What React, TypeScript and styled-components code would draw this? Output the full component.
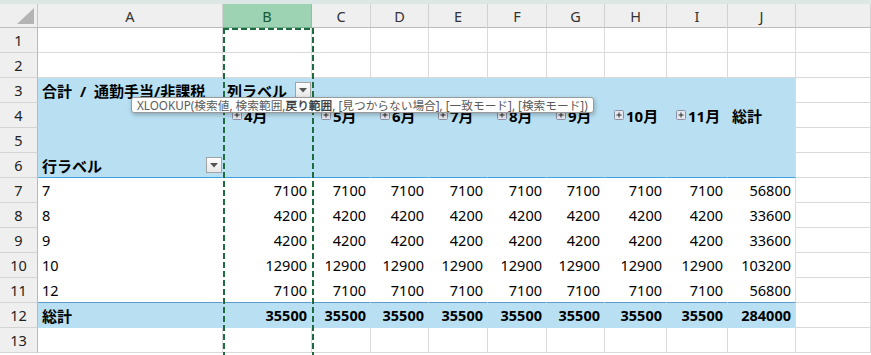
import React from "react";
import styled, { createGlobalStyle } from "styled-components";

const GlobalStyle = createGlobalStyle`
  html, body {
    margin: 0;
    padding: 0;
    background: #ffffff;
  }
  body {
    font-family: "Noto Sans", "Noto Sans CJK JP", sans-serif;
    color: #000;
    overflow: hidden;
  }
`;

const COL_WIDTHS = [185, 89, 59, 58, 59, 59, 58, 62, 61, 68];
const LETTERS = ["A", "B", "C", "D", "E", "F", "G", "H", "I", "J"];
const MONTHS = ["4月", "5月", "6月", "7月", "8月", "9月", "10月", "11月"];

const GRID = "#dadada";
const PIVOT_BLUE = "#b8e0f2";
const HEAD_LINE = "#3ea3de";
const TOTAL_LINE = "#5b9bc8";

type Tone = "plain" | "head" | "data" | "total";

const toneBg: Record<Tone, string> = {
  plain: "#ffffff",
  head: PIVOT_BLUE,
  data: "#ffffff",
  total: PIVOT_BLUE,
};

const Frame = styled.div`
  position: relative;
  width: 871px;
  height: 355px;
  overflow: hidden;
`;

const TopStrip = styled.div`
  height: 4px;
  background: #dde8e6;
`;

const Sheet = styled.div`
  display: grid;
  grid-template-columns: 38px ${COL_WIDTHS.map((w) => `${w}px`).join(" ")} 1fr;
  grid-template-rows: 24px repeat(13, 25px);
`;

const Corner = styled.div`
  box-sizing: border-box;
  display: flex;
  align-items: flex-end;
  justify-content: flex-end;
  padding: 0 3px 3px 0;
  background: #efefef;
  border-right: 1px solid #c6c6c6;
  border-bottom: 1px solid #bcbcbc;
`;

const ColHead = styled.div<{ $selected?: boolean }>`
  box-sizing: border-box;
  display: flex;
  align-items: center;
  justify-content: center;
  font-size: 14.5px;
  color: ${(p) => (p.$selected ? "#145a32" : "#333333")};
  background: ${(p) => (p.$selected ? "#9dd3b3" : "#efefef")};
  border-right: 1px solid ${(p) => (p.$selected ? "#8cc3a3" : "#d2d2d2")};
  border-bottom: 1px solid ${(p) => (p.$selected ? "#6fae8a" : "#bcbcbc")};
`;

const RowHead = styled.div`
  box-sizing: border-box;
  display: flex;
  align-items: center;
  justify-content: center;
  font-size: 14.5px;
  color: #222222;
  background: #efefef;
  border-right: 1px solid #b9b9b9;
  border-bottom: 1px solid #d4d4d4;
`;

const Cell = styled.div<{
  $tone: Tone;
  $right?: boolean;
  $bold?: boolean;
  $indent?: number;
  $lineRight: string;
  $lineBottom: string;
}>`
  box-sizing: border-box;
  display: flex;
  align-items: center;
  justify-content: ${(p) => (p.$right ? "flex-end" : "flex-start")};
  padding: 0 4px 0 ${(p) => p.$indent ?? 4}px;
  font-size: 14.5px;
  font-weight: ${(p) => (p.$bold ? 700 : 400)};
  white-space: nowrap;
  background: ${(p) => toneBg[p.$tone]};
  border-right: 1px solid ${(p) => p.$lineRight};
  border-bottom: 1px solid ${(p) => p.$lineBottom};
`;

const PivotTitle = styled.span`
  font-size: 15px;
  word-spacing: 4px;
`;

const DropButton = styled.span`
  box-sizing: border-box;
  display: flex;
  align-items: center;
  justify-content: center;
  width: 16px;
  height: 16px;
  margin: 0 -4px 0 auto;
  border: 1px solid #a3a3a3;
  background: linear-gradient(#fdfdfd, #e8e8e8);
`;

const MonthLabel = styled.span`
  display: inline-flex;
  align-items: center;
  gap: 2px;
  font-size: 15px;
`;

const Marquee = styled.div`
  position: absolute;
  left: 223px;
  top: 28px;
  width: 91px;
  bottom: 0;
  pointer-events: none;
  background:
    repeating-linear-gradient(to bottom, #1d6b3f 0 6px, transparent 6px 9px) left top / 2px 100% no-repeat,
    repeating-linear-gradient(to bottom, #1d6b3f 0 6px, transparent 6px 9px) right top / 2px 100% no-repeat,
    repeating-linear-gradient(to right, #1d6b3f 0 6px, transparent 6px 9px) left top / 100% 2px no-repeat;
`;

const Tooltip = styled.div`
  position: absolute;
  left: 131px;
  top: 97px;
  z-index: 2;
  box-sizing: border-box;
  height: 16px;
  padding: 0 5px;
  display: flex;
  align-items: center;
  font-size: 11.7px;
  line-height: 14px;
  color: #5a5a5a;
  white-space: nowrap;
  background: #ffffff;
  border: 1px solid #9a9a9a;
  border-radius: 3px;
  box-shadow: 1px 2px 4px rgba(0, 0, 0, 0.25);

  b {
    font-weight: 400;
    color: #333333;
    -webkit-text-stroke: 0.3px #333333;
  }
`;

const CornerMark = () => (
  <svg width="17" height="16" viewBox="0 0 17 16">
    <polygon points="17,0 17,16 0,16" fill="#b4b4b4" />
  </svg>
);

const DropArrow = () => (
  <DropButton>
    <svg width="8" height="5" viewBox="0 0 8 5">
      <polygon points="0,0 8,0 4,4.5" fill="#555555" />
    </svg>
  </DropButton>
);

const PlusBox = () => (
  <svg width="10" height="10" viewBox="0 0 10 10">
    <rect x="0.5" y="0.5" width="9" height="9" rx="1" fill="#e6e7ee" stroke="#8b8fa3" />
    <path d="M2.5 5h5M5 2.5v5" stroke="#2b2b2b" strokeWidth="1" />
  </svg>
);

type Row = {
  label: string;
  value: number;
};

const DATA: Row[] = [
  { label: "7", value: 7100 },
  { label: "8", value: 4200 },
  { label: "9", value: 4200 },
  { label: "10", value: 12900 },
  { label: "12", value: 7100 },
];

const lines = (tone: Tone, col: number, rowNo: number) => {
  if (tone === "plain") return { r: GRID, b: GRID };
  const fill = toneBg[tone];
  const r = col === 9 ? GRID : fill;
  let b = fill;
  if (rowNo === 6) b = HEAD_LINE;
  if (rowNo === 11) b = TOTAL_LINE;
  return { r, b };
};

type CellOpts = { right?: boolean; bold?: boolean; indent?: number };

const App = () => {
  const rows: React.ReactNode[] = [];

  const pushRow = (
    rowNo: number,
    tone: Tone,
    render: (col: number) => React.ReactNode,
    opts?: (col: number) => CellOpts
  ) => {
    rows.push(<RowHead key={`h${rowNo}`}>{rowNo}</RowHead>);
    for (let c = 0; c < 10; c++) {
      const { r, b } = lines(tone, c, rowNo);
      const o = opts ? opts(c) : {};
      rows.push(
        <Cell
          key={`${rowNo}-${c}`}
          $tone={tone}
          $lineRight={r}
          $lineBottom={b}
          $right={o.right}
          $bold={o.bold}
          $indent={o.indent}
        >
          {render(c)}
        </Cell>
      );
    }
    rows.push(<Cell key={`${rowNo}-k`} $tone="plain" $lineRight={GRID} $lineBottom={GRID} />);
  };

  pushRow(1, "plain", () => null);
  pushRow(2, "plain", () => null);
  pushRow(
    3,
    "head",
    (c) => {
      if (c === 0) return <PivotTitle>合計 / 通勤手当/非課税</PivotTitle>;
      if (c === 1)
        return (
          <>
            <PivotTitle>列ラベル</PivotTitle>
            <DropArrow />
          </>
        );
      return null;
    },
    () => ({ bold: true })
  );
  pushRow(
    4,
    "head",
    (c) => {
      if (c >= 1 && c <= 8)
        return (
          <MonthLabel>
            <PlusBox />
            {MONTHS[c - 1]}
          </MonthLabel>
        );
      if (c === 9) return <PivotTitle>総計</PivotTitle>;
      return null;
    },
    (c) => ({ bold: true, indent: c >= 1 && c <= 8 ? 9 : 4 })
  );
  pushRow(5, "head", () => null);
  pushRow(
    6,
    "head",
    (c) =>
      c === 0 ? (
        <>
          <PivotTitle>行ラベル</PivotTitle>
          <DropArrow />
        </>
      ) : null,
    () => ({ bold: true })
  );
  DATA.forEach((d, i) => {
    pushRow(
      7 + i,
      "data",
      (c) => (c === 0 ? d.label : c === 9 ? d.value * 8 : d.value),
      (c) => ({ right: c > 0 })
    );
  });
  pushRow(
    12,
    "total",
    (c) => (c === 0 ? <PivotTitle>総計</PivotTitle> : c === 9 ? 284000 : 35500),
    (c) => ({ right: c > 0, bold: true })
  );
  pushRow(13, "plain", () => null);

  return (
    <Frame>
      <GlobalStyle />
      <TopStrip />
      <Sheet>
        <Corner>
          <CornerMark />
        </Corner>
        {LETTERS.map((l) => (
          <ColHead key={l} $selected={l === "B"}>
            {l}
          </ColHead>
        ))}
        <ColHead />
        {rows}
      </Sheet>
      <Marquee />
      <Tooltip>
        XLOOKUP(検索値, 検索範囲, <b>戻り範囲</b>, [見つからない場合], [一致モード], [検索モード])
      </Tooltip>
    </Frame>
  );
};

export default App;
